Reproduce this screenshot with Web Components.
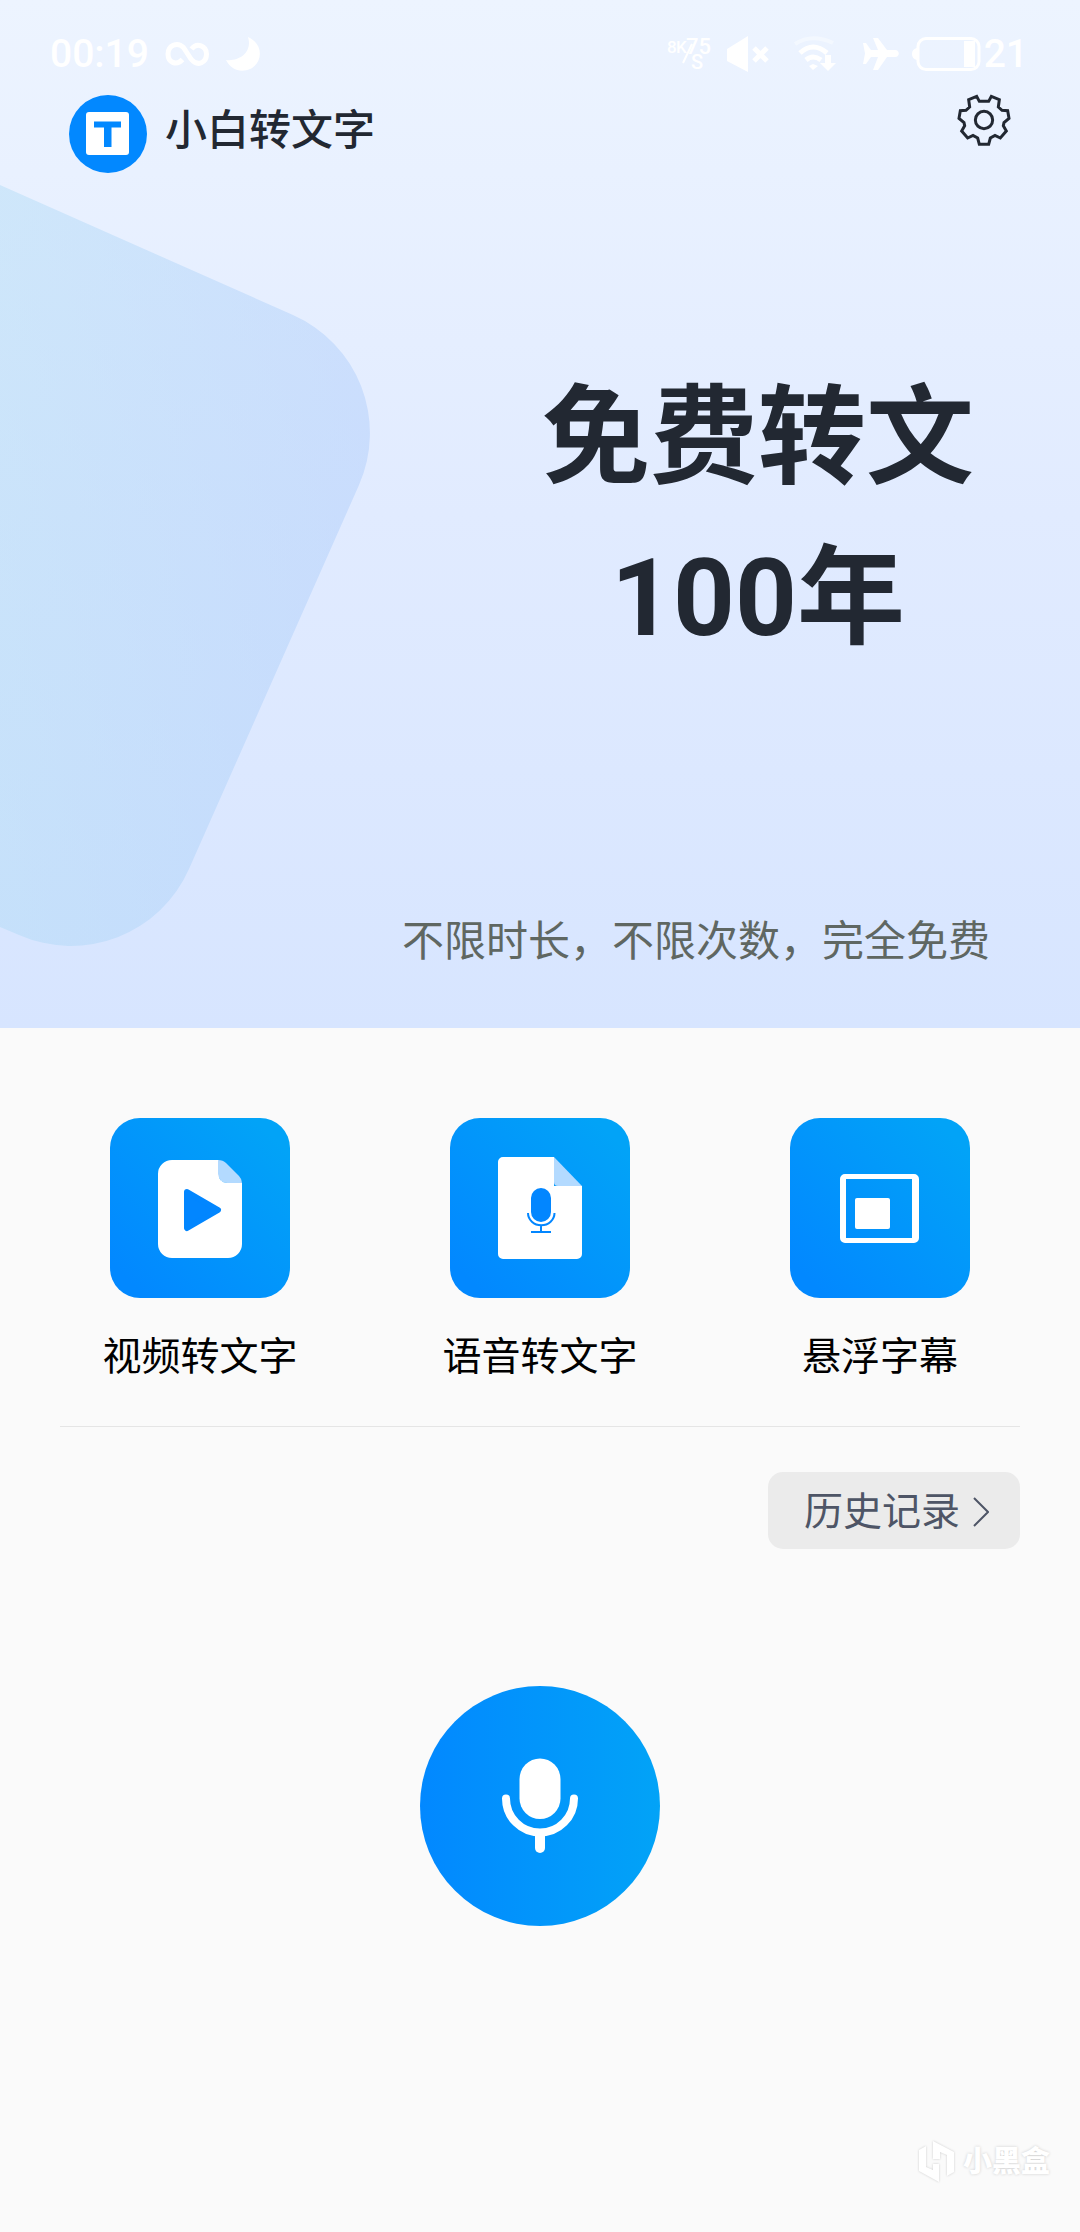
<!DOCTYPE html>
<html lang="zh-CN">
<head>
<meta charset="utf-8">
<meta name="viewport" content="width=device-width, initial-scale=1">
<title>小白转文字</title>
<style>
html, body { margin: 0; }
body {
  background: #fafafa;
  color: #222832;
  font-family: Roboto, "Noto Sans CJK SC", sans-serif;
}
</style>
</head>
<body>
<app-home></app-home>

<script>
const define = (name, html) => {
  const template = document.createElement('template');
  template.innerHTML = html;
  customElements.define(name, class extends HTMLElement {
    constructor() {
      super();
      this.attachShadow({ mode: 'open' }).append(template.content.cloneNode(true));
    }
  });
};

define('status-bar', `
<style>
:host { display: flex; align-items: center; justify-content: space-between; height: 82px; padding: 13px 52px 0 50px; color: #fff; font-size: 39px; line-height: 48px; font-weight: 500; }
.group { display: flex; align-items: center; }
.left { gap: 16px; }
svg { display: block; flex: none; overflow: visible; }
</style>
<div class="group left">
  <span>00:19</span>
  <svg width="44" height="36" viewBox="0 0 44 36" fill="none" stroke="#fff" stroke-width="5"><path d="M17.500 23.500C11 30.500 3 26 3 18C3 10 12 5 18.500 11.500L26 23C33 31.500 41.500 26 41.500 18C41.500 10 32 6 26.500 13"/></svg>
  <svg width="36" height="36" viewBox="0 0 36 36" fill="#fff"><path d="M23 1C39 8 38 27 25 33C16 37 6 34 1 24C13 26 28 17 23 1Z"/></svg>
</div>
<div class="group">
  <svg width="44" height="48" viewBox="0 0 44 48" fill="#fff" font-size="22"><text x="0" y="23" font-size="17">8</text><text x="9" y="23" font-size="17">K</text><text x="19" y="24">75</text><text x="24" y="39" font-size="20">S</text><path d="M16 33L25 14" stroke="#fff" stroke-width="2"/></svg>
  <svg width="76" height="38" viewBox="0 0 76 38"><path d="M16 14L37 1V37L16 26Z" fill="#fff"/><path d="M43 13L56 26M56 13L43 26" stroke="#fff" stroke-width="5"/></svg>
  <svg width="74" height="38" viewBox="0 0 74 38" fill="none" stroke="#fff" stroke-width="5"><path d="M8 9Q25 -2 46 8" opacity=".4" stroke-width="4"/><path d="M13 18Q26 6 40 18M19 25Q26 19 34 25"/><path d="M22 31L26 35L31 31L26 29ZM38 20H44V28H49L41 36L33 28H38Z" fill="#fff" stroke="none"/></svg>
  <svg width="38" height="38" viewBox="0 0 38 38" fill="#fff"><path d="M2 8H5L10 15H17L12 3H17L26 15H34C39 15 39 22 34 22H26L17 35H12L17 22H10L5 29H2L4 18.500Z"/></svg>
  <svg width="85" height="38" viewBox="0 0 85 38"><rect x="19" y="3.500" width="61" height="31" rx="8" fill="none" stroke="#fff" stroke-width="3"/><rect x="65" y="6" width="11" height="26" fill="#fff"/><path d="M18 13V25Q13 24 13 19T18 13Z" fill="#fff"/></svg>
  <span>21</span>
</div>`);

define('app-header', `
<style>
:host { display: flex; align-items: flex-start; padding: 0 71px 0 69px; }
svg { display: block; flex: none; }
h1 { flex: 1; margin: 0 0 0 18px; font-size: 42px; line-height: 72px; font-weight: 500; }
button { padding: 0; border: 0; background: none; width: 50px; height: 50px; display: grid; place-items: center; }
button svg { overflow: visible; }
</style>
<svg width="78" height="78" viewBox="0 0 78 78"><circle cx="39" cy="39" r="39" fill="#0288ff"/><rect x="17" y="17" width="43" height="43" rx="3" fill="#fff"/><path d="M25 26.500H52V32.500H42.500V52H35V32.500H25Z" fill="#0288ff"/></svg>
<h1><slot></slot></h1>
<button type="button" aria-label="设置">
  <svg width="50" height="50" viewBox="-75 -75 150 150" fill="none" stroke="#222832" stroke-width="9"><circle r="26"/><path d="M-14 -56H14L22 -71L46 -61L43 -39L54 -29L71 -28L75 -5L60 8L58 17L67 33L49 54L33 46L19 54L14 73H-14L-19 54L-33 46L-49 54L-67 33L-58 17L-60 8L-75 -5L-71 -28L-54 -29L-43 -39L-46 -61L-22 -71Z"/></svg>
</button>`);

define('hero-banner', `
<style>
:host { display: block; position: relative; overflow: hidden; background: linear-gradient(#edf4ff, #e1ebff 50%, #d7e5ff); }
.shape { position: absolute; left: 0; top: 0; }
.body { position: relative; }
h2 { margin: 185px 0 0 40%; padding-left: 4px; font-size: 108px; line-height: 160px; font-weight: 700; text-align: center; }
h2 span { display: block; }
p { margin: 234px 90px 0 0; padding-bottom: 56px; font-size: 42px; line-height: 60px; text-align: right; color: #5f6762; }
</style>
<svg class="shape" width="372" height="950" viewBox="0 0 372 950" aria-hidden="true">
  <defs><linearGradient id="g"><stop stop-color="#a8d8f4"/><stop offset="1" stop-color="#a5c7fa"/></linearGradient></defs>
  <path d="M0 185L293 315A129 129 0 0 1 359 485L189 869A129 129 0 0 1 19 935L0 927Z" fill="url(#g)" fill-opacity=".4"/>
</svg>
<div class="body">
  <slot></slot>
  <h2><span>免费转文</span><span>100年</span></h2>
  <p>不限时长，不限次数，完全免费</p>
</div>`);

define('feature-tile', `
<style>
:host { display: block; flex: 1; }
button { display: flex; flex-direction: column; align-items: center; gap: 29px; width: 100%; padding: 0; border: 0; background: none; color: #000; font: inherit; font-size: 39px; line-height: 60px; }
.icon { display: block; width: 180px; height: 180px; border-radius: 30px; background: linear-gradient(45deg, #0288ff 10%, #02a3f7 90%); }
</style>
<button type="button"><span class="icon"><slot name="icon"></slot></span><span><slot></slot></span></button>`);

define('history-button', `
<style>
:host { display: flex; justify-content: flex-end; }
button { display: flex; align-items: center; gap: 13px; height: 77px; padding: 2px 31px 0 36px; border: 0; border-radius: 15px; background: #ebebeb; color: #4e5566; font: inherit; font-size: 39px; line-height: 60px; }
</style>
<button type="button"><span><slot></slot></span><svg width="16" height="30" viewBox="0 0 16 30" fill="none" stroke="#4e5566" stroke-width="2"><path d="M1 1L15 15L1 29"/></svg></button>`);

define('record-button', `
<style>
:host { display: flex; justify-content: center; }
button { width: 240px; height: 240px; padding: 0; border: 0; border-radius: 50%; background: linear-gradient(90deg, #0288ff, #02a3f7); }
svg { display: block; }
</style>
<button type="button" aria-label="开始录音"><svg width="240" height="240" viewBox="0 0 240 240" fill="none" stroke="#fff" stroke-linecap="round"><rect x="99.500" y="72.500" width="41" height="60.500" rx="20.500" fill="#fff" stroke="none"/><path d="M86 112.500A34 34 0 0 0 154 112.500" stroke-width="8"/><path d="M120 148V162" stroke-width="10"/></svg></button>`);

define('water-mark', `
<style>
:host { display: flex; justify-content: flex-end; align-items: center; gap: 7px; padding: 0 30px 48px; color: #fff; font-size: 29px; line-height: 44px; font-weight: 900; text-shadow: 0 0 3px #ccc; }
svg { filter: drop-shadow(0 0 1px #ccc); }
</style>
<svg width="38" height="44" viewBox="0 0 38 44" fill="#fff"><path d="M1 10L8 6V27L15 30V24H21V42L1 31ZM15 1L36 12V32L29 36V15L22 12V19H15Z"/></svg>
<span>小黑盒</span>`);

define('app-home', `
<style>
:host { display: flex; flex-direction: column; min-height: 100vh; }
nav { display: flex; padding: 90px 30px 0; }
hr { width: auto; margin: 39px 60px 45px; border: 0; border-top: 1px solid #e5e5e5; }
history-button { padding: 0 60px; }
record-button { margin-top: 137px; }
water-mark { margin-top: auto; }
svg { display: block; }
</style>
<hero-banner><status-bar></status-bar><app-header>小白转文字</app-header></hero-banner>
<nav>
  <feature-tile><svg slot="icon" width="180" height="180" viewBox="0 0 180 180"><path d="M62 42H109V65H132V126A14 14 0 0 1 118 140H62A14 14 0 0 1 48 126V56A14 14 0 0 1 62 42Z" fill="#fff"/><path d="M108 42V56A9 9 0 0 0 117 65H132Q132 61 129 58L116 45Q113 42 108 42Z" fill="#b3daff"/><path d="M108 56V65H117A9 9 0 0 1 108 56Z" fill="#fff"/><path d="M77 74L108 92L77 110Z" fill="#0286ff" stroke="#0286ff" stroke-width="6" stroke-linejoin="round"/></svg>视频转文字</feature-tile>
  <feature-tile><svg slot="icon" width="180" height="180" viewBox="0 0 180 180"><path d="M53 39H104V68H132V136A5 5 0 0 1 127 141H53A5 5 0 0 1 48 136V44A5 5 0 0 1 53 39Z" fill="#fff"/><path d="M104 39L132 68H108A4 4 0 0 1 104 64Z" fill="#b3daff"/><rect x="81" y="70" width="20" height="34" rx="10" fill="#0286ff"/><path d="M78 95A13 12 0 0 0 104.500 95M91 107V114M81 114H101" fill="none" stroke="#0286ff" stroke-width="2"/></svg>语音转文字</feature-tile>
  <feature-tile><svg slot="icon" width="180" height="180" viewBox="0 0 180 180" fill="#fff"><path fill-rule="evenodd" d="M55 56H124A5 5 0 0 1 129 61V120A5 5 0 0 1 124 125H55A5 5 0 0 1 50 120V61A5 5 0 0 1 55 56ZM56 61V120H122V61Z"/><rect x="65" y="80" width="35" height="31" rx="2"/></svg>悬浮字幕</feature-tile>
</nav>
<hr>
<history-button>历史记录</history-button>
<record-button></record-button>
<water-mark></water-mark>`);
</script>
</body>
</html>
